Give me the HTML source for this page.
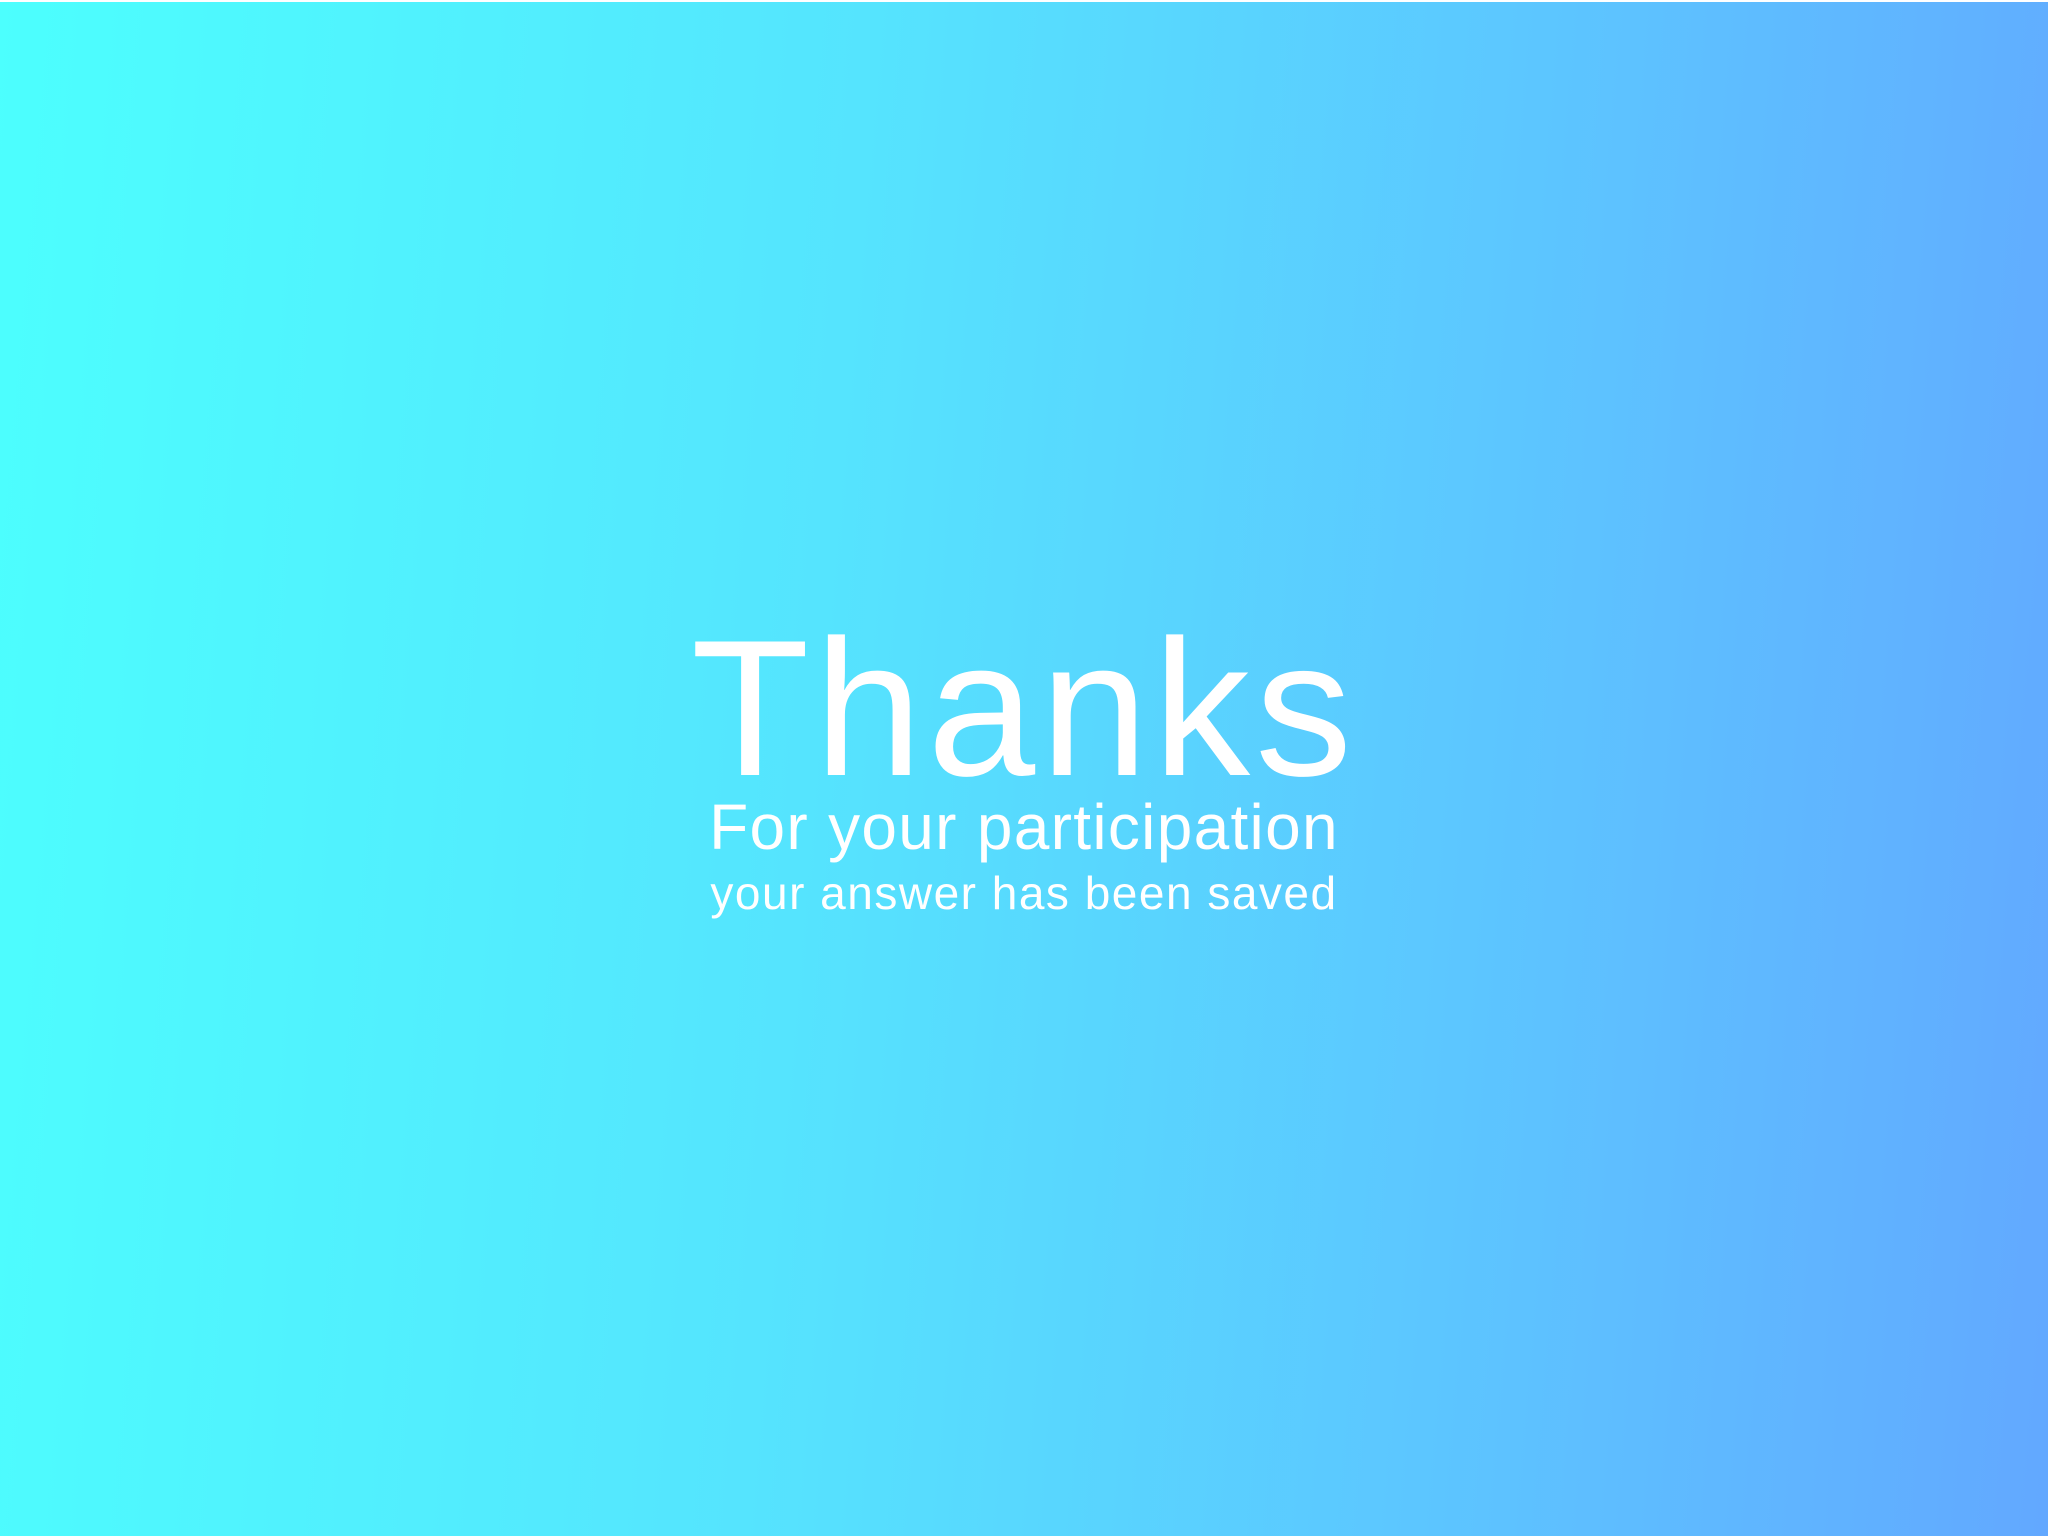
<!DOCTYPE html>
<html><head><meta charset="utf-8"><style>
html,body{margin:0;padding:0;width:2048px;height:1536px;overflow:hidden}
body{background:linear-gradient(95deg,#4cfffe 0%,#55e4fe 40%,#5dc2ff 75%,#62a8ff 100%);position:relative;font-family:"Liberation Sans",sans-serif;color:#fff}
.top{position:absolute;left:0;top:0;width:2048px;height:2px;background:#fff}
.t{position:absolute;left:0;width:2048px;text-align:center;line-height:1;white-space:nowrap}
</style></head><body>
<div class="top"></div>
<div class="t" style="top:612px;font-size:194px;letter-spacing:5px">Thanks</div>
<div class="t" style="top:795px;font-size:64px;letter-spacing:1.3px">For your participation</div>
<div class="t" style="top:870px;font-size:46px;letter-spacing:1.5px">your answer has been saved</div>
</body></html>
